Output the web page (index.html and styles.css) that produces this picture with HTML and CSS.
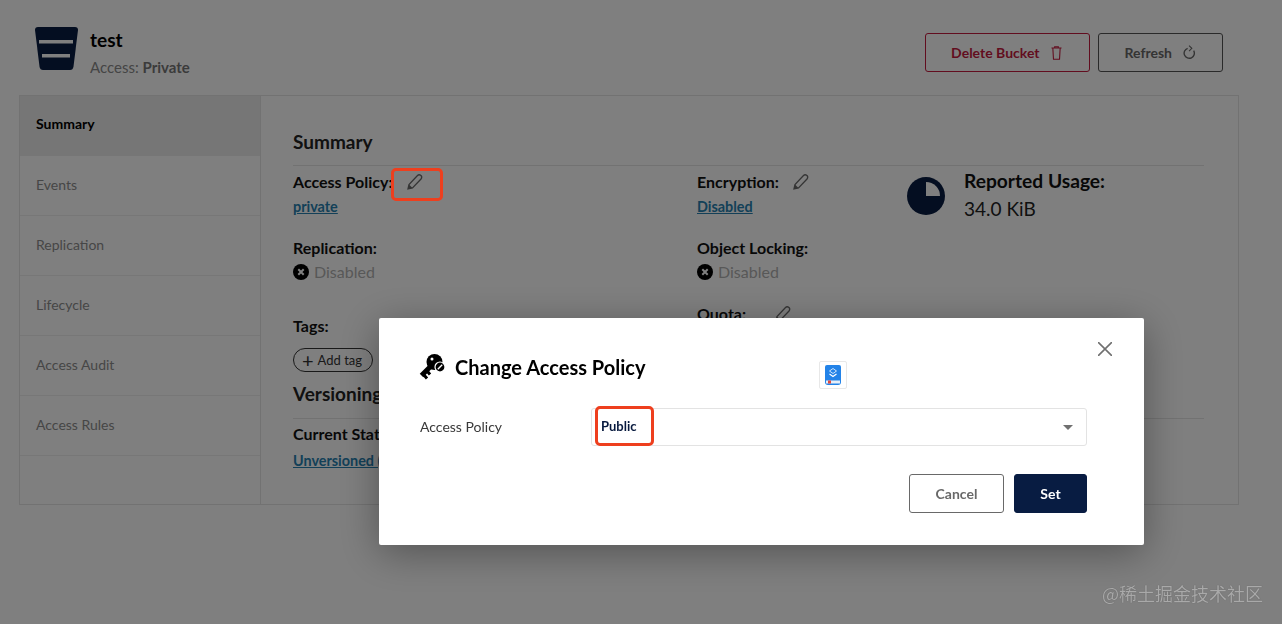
FILE: index.html
```html
<!DOCTYPE html>
<html lang="en">
<head>
    <meta charset="UTF-8">
    <title>Bucket - test</title>
    <link rel="stylesheet" href="styles.css">
</head>
<body>
    <div class="page">
        <header class="bucket-header">
            <div class="bucket-title">
                <svg class="bucket-logo" viewBox="0 0 43 43" width="43" height="43">
                    <path d="M0 3Q0 0 3 0H40Q43 0 43 3L38.5 39.5Q38 43 35 43H8Q5 43 4.5 39.5Z" fill="#081c42"/>
                    <rect x="4" y="13" width="34" height="3.5" fill="#fff"/>
                    <rect x="7" y="27" width="28" height="3.5" fill="#fff"/>
                </svg>
                <div>
                    <h1>test</h1>
                    <p class="bucket-access">Access: <b>Private</b></p>
                </div>
            </div>
            <div class="header-actions">
                <button class="btn btn-danger">Delete Bucket
                    <svg viewBox="0 0 12 15" width="11" height="14" fill="none" stroke="currentColor" stroke-width="1.2"><path d="M.5 2H11.5M2 2L2.7 14.3H9.3L10 2M4 2V.7H8V2"/></svg>
                </button>
                <button class="btn">Refresh
                    <svg viewBox="0 0 14 16" width="13" height="15" fill="none" stroke="currentColor" stroke-width="1.5"><path d="M5 3.5A5.5 5.5 0 1 0 11.5 6"/><path d="M6.5 .5L9.5 3.5L6.5 6.5" stroke-width="1.2"/></svg>
                </button>
            </div>
        </header>

        <div class="panel">
            <nav class="side-menu">
                <a class="side-item active">Summary</a>
                <a class="side-item">Events</a>
                <a class="side-item">Replication</a>
                <a class="side-item">Lifecycle</a>
                <a class="side-item">Access Audit</a>
                <a class="side-item">Access Rules</a>
            </nav>
            <main class="content">
                <h2 class="section-title summary-title">Summary</h2>
                <div class="summary-grid">
                    <div class="summary-col">
                        <div class="field field-policy">
                            <div class="field-label">Access Policy:
                                <svg class="edit-icon" viewBox="0 0 18 18" width="18" height="18"><use href="#pencil"/></svg>
                            </div>
                            <a class="field-link">private</a>
                        </div>
                        <div class="field field-replication">
                            <div class="field-label">Replication:</div>
                            <div class="field-off">
                                <svg viewBox="0 0 16 16" width="16" height="16"><use href="#off"/></svg>
                                Disabled
                            </div>
                        </div>
                        <div class="field field-tags">
                            <div class="field-label">Tags:</div>
                            <span class="tag-pill"><span class="tag-plus">+</span> Add tag</span>
                        </div>
                    </div>
                    <div class="summary-col">
                        <div class="field field-policy">
                            <div class="field-label">Encryption:
                                <svg class="edit-icon" viewBox="0 0 18 18" width="18" height="18"><use href="#pencil"/></svg>
                            </div>
                            <a class="field-link">Disabled</a>
                        </div>
                        <div class="field field-replication field-locking">
                            <div class="field-label">Object Locking:</div>
                            <div class="field-off">
                                <svg viewBox="0 0 16 16" width="16" height="16"><use href="#off"/></svg>
                                Disabled
                            </div>
                        </div>
                        <div class="field field-quota">
                            <div class="field-label">Quota:
                                <svg class="edit-icon quota-edit" viewBox="0 0 18 18" width="18" height="18"><use href="#pencil"/></svg>
                            </div>
                        </div>
                    </div>
                    <div class="usage">
                        <svg viewBox="0 0 38 38" width="38" height="38">
                            <circle cx="19" cy="19" r="19" fill="#081c42"/>
                            <path d="M19 5A14 14 0 0 1 33 19H19Z" fill="#fff"/>
                        </svg>
                        <div>
                            <div class="usage-label">Reported Usage:</div>
                            <div class="usage-value">34.0 KiB</div>
                        </div>
                    </div>
                </div>
                <h2 class="section-title versioning-title">Versioning</h2>
                <div class="field-label">Current Status:</div>
                <a class="field-link status-link">Unversioned (Default)</a>
            </main>
        </div>
    </div>

    <div class="overlay">
        <div class="markup markup-edit"></div>
        <div class="modal">
            <button class="modal-close" aria-label="Close">
                <svg viewBox="0 0 14 14" width="14" height="14" fill="none" stroke="#707070" stroke-width="1.6"><path d="M0 0L14 14M14 0L0 14"/></svg>
            </button>
            <div class="modal-title">
                <svg viewBox="0 0 26 26" width="26" height="26">
                    <circle cx="15.5" cy="8" r="8" fill="#000"/>
                    <circle cx="13" cy="5" r="1.5" fill="#fff"/>
                    <path d="M12 12L2.5 21.5" stroke="#000" stroke-width="5"/>
                    <path d="M5 21L8 24.5M8.5 17.5L11 20.5" stroke="#000" stroke-width="3"/>
                    <circle cx="21" cy="13" r="5" fill="#000" stroke="#fff" stroke-width="1.2"/>
                    <path d="M18.8 15.2L23.2 10.8" stroke="#fff" stroke-width="1.4"/>
                </svg>
                <h3>Change Access Policy</h3>
            </div>
            <span class="helper-badge">
                <svg viewBox="0 0 16 20" width="16" height="20">
                    <path d="M2 0H14Q16 0 16 2V17Q16 20 13 20H3Q0 20 0 17V2Q0 0 2 0Z" fill="#2383e8"/>
                    <path d="M4.5 6L8 3.5L11.5 6L8 8.5Z" fill="none" stroke="#cfe4fb" stroke-width="1"/>
                    <path d="M4.5 9L8 11.5L11.5 9" fill="none" stroke="#fff" stroke-width="1.2"/>
                    <rect x="1" y="15.5" width="14" height="3" fill="#e8eff8"/>
                    <rect x="3" y="15.5" width="3" height="3" fill="#e2483d"/>
                </svg>
            </span>
            <div class="form-row">
                <label class="form-label">Access Policy</label>
                <div class="select-box">
                    <span class="select-value">Public</span>
                    <span class="select-caret"></span>
                    <div class="markup markup-public"></div>
                </div>
            </div>
            <div class="modal-actions">
                <button class="modal-btn">Cancel</button>
                <button class="modal-btn modal-btn-primary">Set</button>
            </div>
        </div>
        <div class="watermark">@稀土掘金技术社区</div>
    </div>

    <svg class="icon-defs" width="0" height="0">
        <symbol id="pencil" viewBox="0 0 18 18">
            <path d="M2 16L3 11.5L11.5 2.5Q13 1 15 2.5Q16.5 4 15 6L6.5 15Z" fill="none" stroke="#6b6b6b" stroke-width="1.3"/>
            <path d="M2 16L3 11.5L6.5 15Z" fill="#6b6b6b"/>
        </symbol>
        <symbol id="off" viewBox="0 0 16 16">
            <circle cx="8" cy="8" r="8" fill="#000"/>
            <path d="M5.3 5.3L10.7 10.7M10.7 5.3L5.3 10.7" stroke="#fff" stroke-width="2"/>
        </symbol>
    </svg>
</body>
</html>
```
FILE: styles.css
```css
* {
    margin: 0;
    padding: 0;
    box-sizing: border-box;
}

html, body {
    height: 100%;
    overflow: hidden;
}

body {
    background: #fff;
    font-family: Lato, "Noto Sans", sans-serif;
    color: #000;
}

.page {
    padding: 0 43px 0 19px;
}

.bucket-header {
    height: 95px;
    display: flex;
    justify-content: space-between;
    align-items: flex-start;
    padding: 27px 16px 0 16px;
}

.bucket-title {
    display: flex;
    gap: 12px;
}

.bucket-title h1 {
    font-size: 19px;
    line-height: 26px;
    font-weight: 700;
    color: #000;
    margin-bottom: 3px;
}

.bucket-access {
    font-size: 15px;
    line-height: 22px;
    color: #8a8a8a;
}

.bucket-access b {
    color: #777;
}

.header-actions {
    display: flex;
    gap: 8px;
    margin-top: 6px;
}

.btn {
    height: 39px;
    padding: 0 26px;
    display: flex;
    align-items: center;
    gap: 11px;
    background: #fff;
    border: 1px solid #555;
    border-radius: 3px;
    font-family: inherit;
    font-size: 14px;
    font-weight: 700;
    color: #696969;
}

.btn-danger {
    padding: 0 27px 0 25px;
    border-color: #c51b3f;
    color: #c51b3f;
}

.panel {
    width: 1220px;
    height: 410px;
    display: flex;
    border: 1px solid #e5e5e5;
}

.side-menu {
    width: 241px;
    flex-shrink: 0;
    border-right: 1px solid #e5e5e5;
}

.side-item {
    display: flex;
    align-items: center;
    height: 60px;
    padding: 0 0 2px 16px;
    font-size: 14px;
    color: #8d8d8d;
    border-bottom: 1px solid #eee;
}

.side-item.active {
    background: #ececec;
    font-weight: 700;
    color: #000;
    border-bottom: 0;
    padding-bottom: 5px;
}

.content {
    flex: 1;
    padding: 32px 34px 0 32px;
}

.section-title {
    font-size: 19px;
    line-height: 27px;
    font-weight: 700;
    color: #222;
    border-bottom: 1px solid #e5e5e5;
}

.summary-title {
    padding-bottom: 10px;
}

.summary-grid {
    display: grid;
    grid-template-columns: 404px 210px 1fr;
    height: 214px;
    padding-top: 5px;
}

.field-label {
    display: flex;
    align-items: center;
    font-size: 16px;
    line-height: 22px;
    font-weight: 700;
    color: #111;
}

.field-link {
    display: block;
    font-size: 14.4px;
    line-height: 20px;
    font-weight: 700;
    color: #2781b0;
    text-decoration: underline;
}

.field-policy {
    height: 66px;
}

.field-policy .field-link {
    margin-top: 4px;
}

.edit-icon {
    margin-left: 13px;
}

.quota-edit {
    margin-left: 28px;
}

.field-replication {
    height: 78px;
}

.field-locking {
    height: 66px;
}

.field-off {
    display: flex;
    align-items: center;
    gap: 5px;
    margin-top: 2px;
    font-size: 16px;
    line-height: 22px;
    color: #b0b0b0;
}

.tag-pill {
    display: inline-flex;
    align-items: center;
    gap: 4px;
    height: 24px;
    margin-top: 11px;
    padding: 0 10px 0 8px;
    border: 1px solid #333;
    border-radius: 12px;
    font-size: 13px;
    color: #333;
}

.tag-plus {
    font-size: 20px;
    line-height: 18px;
}

.usage {
    display: flex;
    gap: 19px;
    align-items: flex-start;
    padding-top: 6px;
}

.usage-label {
    margin-top: -9px;
    font-size: 19.2px;
    line-height: 26px;
    font-weight: 700;
    color: #111;
}

.usage-value {
    margin-top: 3px;
    font-size: 19px;
    line-height: 24px;
    color: #222;
}

.versioning-title {
    padding-bottom: 11px;
    margin-bottom: 4px;
}

.status-link {
    margin-top: 6px;
}

/* dark layer over the whole page */
.overlay {
    position: fixed;
    inset: 0;
    background: rgba(0, 0, 0, 0.5);
}

.modal {
    position: absolute;
    left: 379px;
    top: 318px;
    width: 765px;
    height: 227px;
    padding: 34px 57px 0 40px;
    background: #fff;
    border-radius: 2px;
    box-shadow: 0 8px 40px rgba(0, 0, 0, 0.35);
}

.modal-close {
    position: absolute;
    top: 24px;
    right: 32px;
    background: none;
    border: 0;
    line-height: 0;
}

.modal-title {
    display: flex;
    align-items: center;
    height: 30px;
}

.modal-title h3 {
    margin-left: 10px;
    font-size: 20px;
    font-weight: 700;
    color: #000;
}

/* browser extension button sitting on the dialog */
.helper-badge {
    position: absolute;
    left: 440px;
    top: 43px;
    display: flex;
    align-items: center;
    justify-content: center;
    width: 28px;
    height: 28px;
    background: #fff;
    border: 1px solid #e8e8e8;
    border-radius: 2px;
}

.form-row {
    display: flex;
    align-items: center;
    margin-top: 26px;
}

.form-label {
    width: 172px;
    padding: 0 0 2px 1px;
    font-size: 14px;
    color: #393939;
}

.select-box {
    position: relative;
    flex: 1;
    height: 38px;
    display: flex;
    align-items: center;
    justify-content: space-between;
    padding: 0 13px 2px 9px;
    border: 1px solid #e3e3e3;
    border-radius: 3px;
}

.select-value {
    font-size: 13px;
    font-weight: 700;
    color: #07193e;
}

.select-caret {
    width: 0;
    height: 0;
    margin-top: 2px;
    border-left: 5px solid transparent;
    border-right: 5px solid transparent;
    border-top: 5px solid #707070;
}

.modal-actions {
    display: flex;
    justify-content: flex-end;
    gap: 10px;
    margin-top: 28px;
}

.modal-btn {
    width: 95px;
    height: 39px;
    background: #fff;
    border: 1px solid #696969;
    border-radius: 3px;
    font-family: inherit;
    font-size: 14px;
    font-weight: 700;
    color: #696969;
}

.modal-btn-primary {
    width: 73px;
    background: #081c42;
    border-color: #081c42;
    color: #fff;
}

/* red boxes drawn on the screenshot */
.markup {
    position: absolute;
    border: 3px solid #ee3f1e;
    border-radius: 5px;
}

.markup-edit {
    left: 391px;
    top: 168px;
    width: 52px;
    height: 33px;
}

.markup-public {
    left: 3px;
    top: -3px;
    width: 59px;
    height: 40px;
}

.watermark {
    position: absolute;
    right: 19px;
    bottom: 20px;
    font-family: "Noto Sans CJK SC", sans-serif;
    font-size: 18px;
    line-height: 22px;
    color: #a9a9a9;
    text-shadow: 0 0 1px #555;
}

.icon-defs {
    position: absolute;
}
```
